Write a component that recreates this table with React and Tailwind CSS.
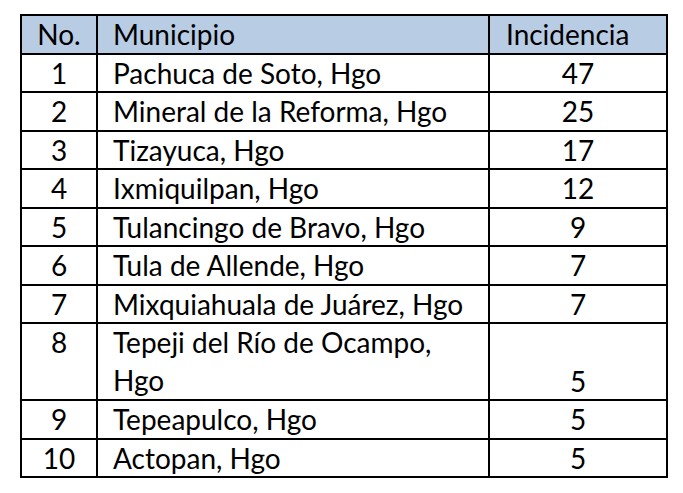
const rows = [
  ['1', 'Pachuca de Soto, Hgo', '47'],
  ['2', 'Mineral de la Reforma, Hgo', '25'],
  ['3', 'Tizayuca, Hgo', '17'],
  ['4', 'Ixmiquilpan, Hgo', '12'],
  ['5', 'Tulancingo de Bravo, Hgo', '9'],
  ['6', 'Tula de Allende, Hgo', '7'],
  ['7', 'Mixquiahuala de Juárez, Hgo', '7'],
  ['8', ['Tepeji del Río de Ocampo,', 'Hgo'], '5'],
  ['9', 'Tepeapulco, Hgo', '5'],
  ['10', 'Actopan, Hgo', '5'],
]

export default function App() {
  return (
    <div className="w-[683px] h-[493px] bg-white pt-[14px] pl-[20px]" style={{ fontFamily: 'Lato, sans-serif' }}>
      <table className="border-collapse text-[28px] leading-[36.5px] text-black">
        <thead>
          <tr className="bg-[#b8cce4]">
            <th className="w-[76px] p-0 border-2 border-black font-normal text-center align-bottom">No.</th>
            <th className="w-[392px] p-0 border-2 border-black font-normal text-left pl-[15px] align-bottom">Municipio</th>
            <th className="w-[178px] p-0 border-2 border-black font-normal text-left pl-[16px] align-bottom">Incidencia</th>
          </tr>
        </thead>
        <tbody>
          {rows.map(([n, m, v]) => (
            <tr key={n}>
              <td className="p-0 border-2 border-black text-center align-top">{n}</td>
              <td className="p-0 border-2 border-black pl-[15px] align-top">
                {Array.isArray(m) ? m.map((l) => <div key={l} className="leading-[37.5px]">{l}</div>) : m}
              </td>
              <td className="p-0 border-2 border-black text-center align-bottom">{v}</td>
            </tr>
          ))}
        </tbody>
      </table>
    </div>
  )
}
